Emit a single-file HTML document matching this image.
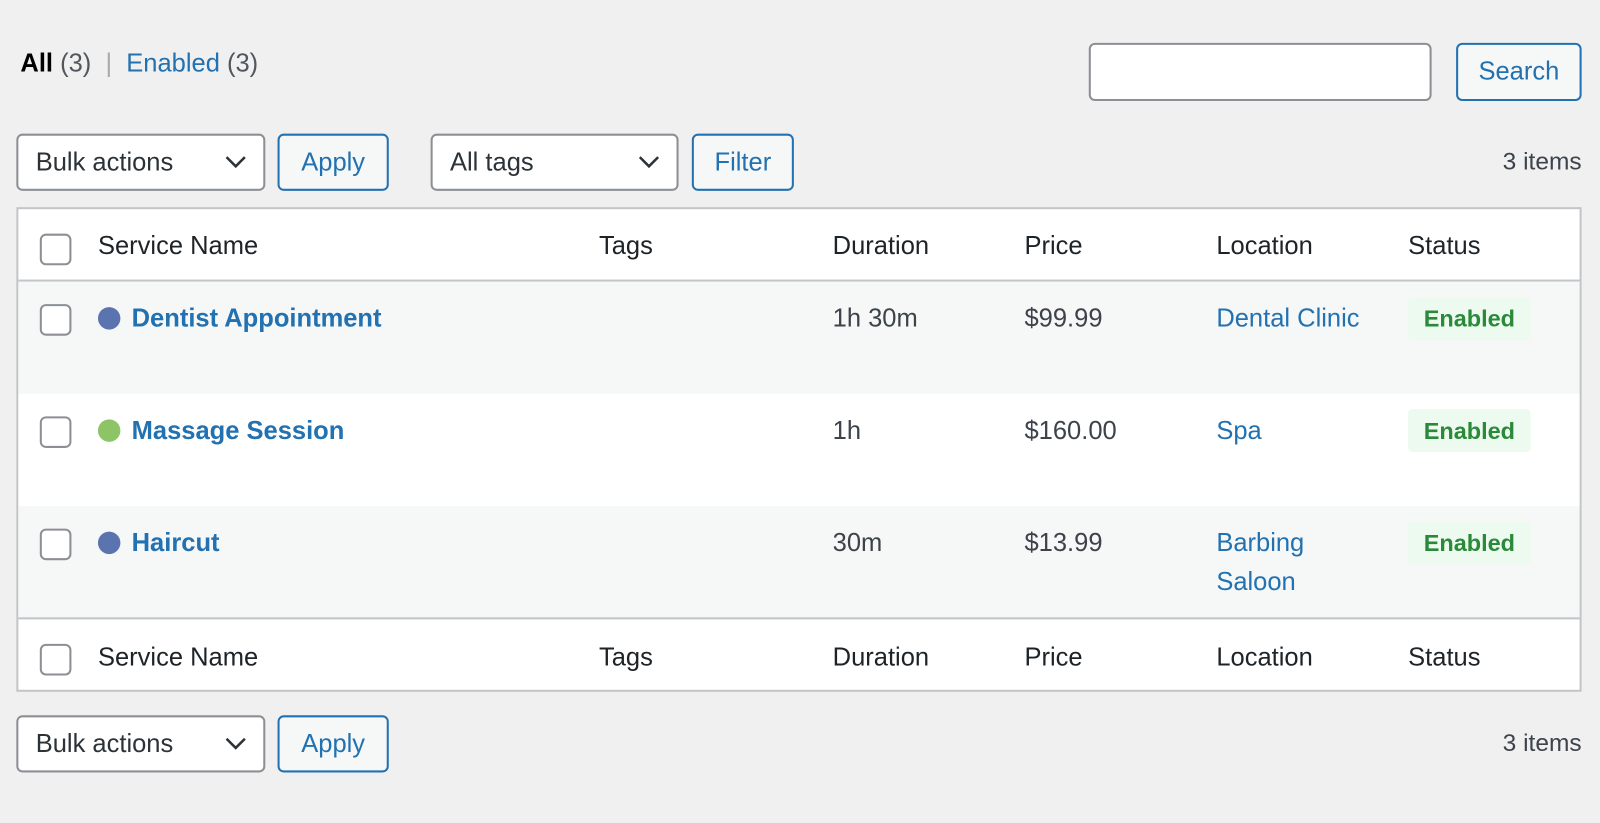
<!DOCTYPE html>
<html><head><meta charset="utf-8"><style>
*{box-sizing:border-box;margin:0;padding:0}
body{width:1600px;height:807px;background:#f0f0f1;font-family:"Liberation Sans",sans-serif;color:#3c434a;overflow:hidden;font-size:25px}
#w{position:absolute;left:0;top:0;width:1600px;height:807px;transform:scale(1.0204);transform-origin:0 0}
.a{position:absolute;white-space:nowrap}
.sel{position:absolute;background:#fff;border:2px solid #8c8f94;border-radius:6px;color:#2c3338;font-size:25px;padding-left:17px;display:flex;align-items:center}
.sel svg{position:absolute;right:16px;top:50%;margin-top:-7px}
.btn{position:absolute;background:#f6f7f7;border:2px solid #2271b1;border-radius:6px;color:#2271b1;font-size:25px;display:flex;align-items:center;justify-content:center}
.tbl{position:absolute;left:16px;top:203px;width:1534px;height:475px;background:#fff;border:2px solid #c3c4c7}
.row{position:absolute;left:0;width:1530px}
.cb{position:absolute;left:21px;width:31px;height:31px;border:2px solid #8c8f94;border-radius:6px;background:#fff}
.lnk{color:#2271b1}
.dot{position:absolute;width:22px;height:22px;border-radius:50%}
.badge{position:absolute;left:1362px;width:120px;height:42px;background:#edfaef;border-radius:4px;color:#2a8a3a;font-size:23px;font-weight:bold;display:flex;align-items:center;justify-content:center}
.h{color:#1d2327}
</style></head><body><div id="w">
<div class="a" style="left:20px;top:48px;color:#50575e"><b style="color:#000">All</b> (3) &nbsp;<span style="color:#a7aaad">|</span>&nbsp; <span class="lnk">Enabled</span> (3)</div>
<div class="a" style="left:1067px;top:42px;width:336px;height:57px;background:#fff;border:2px solid #8c8f94;border-radius:6px"></div>
<div class="btn" style="left:1427px;top:42px;width:123px;height:57px">Search</div>

<div class="sel" style="left:16px;top:131px;width:244px;height:56px">Bulk actions<svg width="22" height="14" viewBox="0 0 22 14"><path d="M2 2l9 9 9-9" fill="none" stroke="#2c3338" stroke-width="2.5"/></svg></div>
<div class="btn" style="left:272px;top:131px;width:109px;height:56px">Apply</div>
<div class="sel" style="left:422px;top:131px;width:243px;height:56px">All tags<svg width="22" height="14" viewBox="0 0 22 14"><path d="M2 2l9 9 9-9" fill="none" stroke="#2c3338" stroke-width="2.5"/></svg></div>
<div class="btn" style="left:678px;top:131px;width:100px;height:56px">Filter</div>
<div class="a" style="right:50px;top:145px;color:#3c434a;font-size:24px">3 items</div>

<div class="tbl">
 <div class="row h" style="top:0;height:71px;border-bottom:2px solid #c3c4c7">
  <div class="cb" style="top:24px"></div>
  <div class="a" style="left:78px;top:22px">Service Name</div>
  <div class="a" style="left:569px;top:22px">Tags</div>
  <div class="a" style="left:798px;top:22px">Duration</div>
  <div class="a" style="left:986px;top:22px">Price</div>
  <div class="a" style="left:1174px;top:22px">Location</div>
  <div class="a" style="left:1362px;top:22px">Status</div>
 </div>
 <div class="row" style="top:71px;height:110px;background:#f6f7f7">
  <div class="cb" style="top:22px"></div>
  <div class="dot" style="left:78px;top:25px;background:#5b74b0"></div>
  <div class="a lnk" style="left:111px;top:22px;font-weight:bold">Dentist Appointment</div>
  <div class="a" style="left:798px;top:22px">1h 30m</div>
  <div class="a" style="left:986px;top:22px">$99.99</div>
  <div class="a lnk" style="left:1174px;top:22px">Dental Clinic</div>
  <div class="badge" style="top:15px">Enabled</div>
 </div>
 <div class="row" style="top:181px;height:110px;background:#fff">
  <div class="cb" style="top:22px"></div>
  <div class="dot" style="left:78px;top:25px;background:#8cc466"></div>
  <div class="a lnk" style="left:111px;top:22px;font-weight:bold">Massage Session</div>
  <div class="a" style="left:798px;top:22px">1h</div>
  <div class="a" style="left:986px;top:22px">$160.00</div>
  <div class="a lnk" style="left:1174px;top:22px">Spa</div>
  <div class="badge" style="top:15px">Enabled</div>
 </div>
 <div class="row" style="top:291px;height:111px;background:#f6f7f7;border-bottom:2px solid #c3c4c7">
  <div class="cb" style="top:22px"></div>
  <div class="dot" style="left:78px;top:25px;background:#5b74b0"></div>
  <div class="a lnk" style="left:111px;top:22px;font-weight:bold">Haircut</div>
  <div class="a" style="left:798px;top:22px">30m</div>
  <div class="a" style="left:986px;top:22px">$13.99</div>
  <div class="a lnk" style="left:1174px;line-height:38px;top:17px;white-space:normal">Barbing<br>Saloon</div>
  <div class="badge" style="top:15px">Enabled</div>
 </div>
 <div class="row h" style="top:402px;height:71px">
  <div class="cb" style="top:24px"></div>
  <div class="a" style="left:78px;top:23px">Service Name</div>
  <div class="a" style="left:569px;top:23px">Tags</div>
  <div class="a" style="left:798px;top:23px">Duration</div>
  <div class="a" style="left:986px;top:23px">Price</div>
  <div class="a" style="left:1174px;top:23px">Location</div>
  <div class="a" style="left:1362px;top:23px">Status</div>
 </div>
</div>

<div class="sel" style="left:16px;top:701px;width:244px;height:56px">Bulk actions<svg width="22" height="14" viewBox="0 0 22 14"><path d="M2 2l9 9 9-9" fill="none" stroke="#2c3338" stroke-width="2.5"/></svg></div>
<div class="btn" style="left:272px;top:701px;width:109px;height:56px">Apply</div>
<div class="a" style="right:50px;top:715px;font-size:24px">3 items</div>
</div></body></html>
